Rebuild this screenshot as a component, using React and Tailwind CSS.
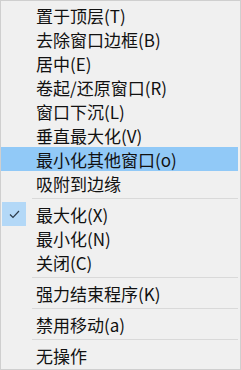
import React from "react";

const groups = [
  ["置于顶层(T)", "去除窗口边框(B)", "居中(E)", "卷起/还原窗口(R)", "窗口下沉(L)", "垂直最大化(V)", "最小化其他窗口(o)", "吸附到边缘"],
  ["最大化(X)", "最小化(N)", "关闭(C)"],
  ["强力结束程序(K)"],
  ["禁用移动(a)"],
  ["无操作"],
];

function Item({ label, active, checked }) {
  return (
    <div className={"relative flex h-[24px] items-center pl-[35px] " + (active ? "bg-[#91c9f7]" : "")}>
      {checked && (
        <div className="absolute left-[1px] top-0 flex h-[24px] w-[24px] items-center justify-center bg-[#b3d8f7]">
          <svg width="11" height="9" viewBox="0 0 11 9">
            <polyline points="1,4.5 4,7.5 10,1" fill="none" stroke="#2b3a4a" strokeWidth="1.2" />
          </svg>
        </div>
      )}
      <span className="whitespace-nowrap text-[17px] leading-none text-[#111]">{label}</span>
    </div>
  );
}

export default function App() {
  return (
    <div
      className="flex h-[370px] w-[241px] flex-col border border-[#cfcfcf] bg-[#f0f0f0] pt-[2px] pr-[2px]"
      style={{ fontFamily: '"Noto Sans CJK SC", "Noto Sans", sans-serif' }}
    >
      {groups.map((g, gi) => (
        <div key={gi} className="flex flex-col">
          {gi > 0 && <div className="my-[3px] ml-[31px] h-px bg-[#d9d9d9]" />}
          {g.map((label) => (
            <Item key={label} label={label} active={label === "最小化其他窗口(o)"} checked={label === "最大化(X)"} />
          ))}
        </div>
      ))}
    </div>
  );
}
